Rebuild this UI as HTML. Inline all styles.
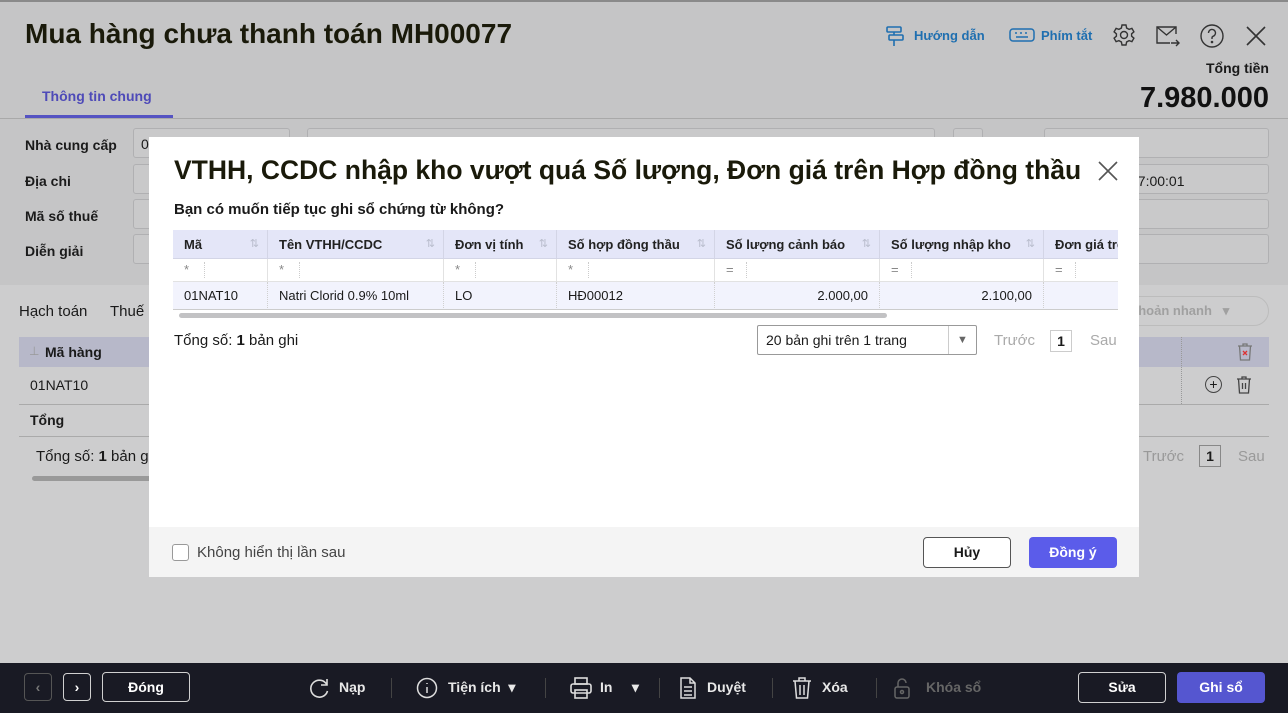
<!DOCTYPE html>
<html><head><meta charset="utf-8"><style>
*{box-sizing:border-box;margin:0;padding:0}
body{width:1288px;height:713px;overflow:hidden;font-family:"Liberation Sans",sans-serif;background:#c5c5c6;position:relative;color:#1a1a1a;font-size:14px}
.a{position:absolute}
.lbl{font-weight:bold;font-size:14px;color:#1b1b1b}
.box{position:absolute;border:1px solid #b0b0b2;border-radius:3px;background:#c9c9ca}
.th{position:absolute;top:0;height:29px;line-height:29px;font-weight:bold;font-size:13px;padding-left:11px;border-right:1px solid #d3d5e6;color:#222}
.srt{position:absolute;right:8px;top:0;color:#b8bccc;font-size:11px;font-weight:normal}
.fl{position:absolute;top:0;height:22px;line-height:22px;padding-left:11px;color:#888;font-size:13px;border-right:1px solid #e2e2e2}
.fl i{position:absolute;left:31px;top:3px;bottom:3px;border-left:1px dotted #ccc}
.td{position:absolute;top:0;height:28px;line-height:28px;font-size:13px;padding:0 11px;border-right:1px dotted #d0d0d0}
.btn{position:absolute;border:1px solid #d0d0d0;border-radius:4px;text-align:center;color:#fff;font-weight:bold;font-size:14px}
.ft{position:absolute;top:679px;color:#e8e8e8;font-size:14px;font-weight:bold}
.sep{position:absolute;top:678px;width:1px;height:20px;background:#444}
</style></head><body>
<div class="a" style="left:0;top:0;width:1288px;height:2px;background:#8a8a8a"></div>
<div class="a" style="left:25px;top:18px;font-size:28px;font-weight:bold;color:#1a1a0a">Mua hàng chưa thanh toán MH00077</div>
<svg class="a" style="left:884px;top:25px" width="22" height="22" viewBox="0 0 22 22" fill="none" stroke="#1f6fb0" stroke-width="1.6"><rect x="3" y="2" width="14" height="5" rx="1"/><rect x="5" y="10" width="14" height="5" rx="1"/><path d="M10 7v3M10 15v6"/></svg>
<div class="a" style="left:914px;top:28px;color:#1f6fb0;font-size:13px;font-weight:bold">Hướng dẫn</div>
<svg class="a" style="left:1009px;top:27px" width="26" height="16" viewBox="0 0 26 16" fill="none" stroke="#1f6fb0" stroke-width="1.5"><rect x="1" y="2" width="24" height="12" rx="3"/><path d="M6 6h2M11 6h2M16 6h2M7 10h12"/></svg>
<div class="a" style="left:1041px;top:28px;color:#1f6fb0;font-size:13px;font-weight:bold">Phím tắt</div>
<svg class="a" style="left:1112px;top:23px" width="24" height="24" viewBox="0 0 24 24" fill="none" stroke="#333" stroke-width="1.4"><circle cx="12" cy="12" r="3.5"/><path d="M10 2h4l.6 3 2.5 1.4 2.8-1 2 3.4-2.3 2v2.4l2.3 2-2 3.4-2.8-1-2.5 1.4-.6 3h-4l-.6-3-2.5-1.4-2.8 1-2-3.4 2.3-2v-2.4l-2.3-2 2-3.4 2.8 1L9.4 5z"/></svg>
<svg class="a" style="left:1155px;top:24px" width="26" height="24" viewBox="0 0 26 24" fill="none" stroke="#333" stroke-width="1.4"><path d="M21 10V3H2v16h13"/><path d="M2 3l9.5 8L21 3"/><path d="M16 19h8M21 16l3 3-3 3"/></svg>
<svg class="a" style="left:1199px;top:23px" width="26" height="26" viewBox="0 0 26 26" fill="none" stroke="#333" stroke-width="1.4"><circle cx="13" cy="13" r="11"/><path d="M9.5 10a3.5 3.5 0 1 1 4.5 3.3c-.7.3-1 .9-1 1.7v1"/><circle cx="13" cy="19" r=".6" fill="#333"/></svg>
<svg class="a" style="left:1245px;top:25px" width="22" height="22" viewBox="0 0 22 22" stroke="#333" stroke-width="1.6"><path d="M2 2l18 18M20 2L2 20"/></svg>
<div class="a" style="right:19px;top:60px;font-size:14px;font-weight:bold">Tổng tiền</div>
<div class="a" style="right:19px;top:82px;font-size:29px;font-weight:bold;color:#111">7.980.000</div>
<div class="a" style="left:42px;top:88px;font-size:14px;font-weight:bold;color:#4e4ab8">Thông tin chung</div>
<div class="a" style="left:25px;top:115px;width:148px;height:3px;background:#5553c2"></div>
<div class="a" style="left:0;top:118px;width:1288px;height:1px;background:#a9a9a9"></div>
<div class="a lbl" style="left:25px;top:137px">Nhà cung cấp</div>
<div class="a lbl" style="left:25px;top:173px">Địa chi</div>
<div class="a lbl" style="left:25px;top:208px">Mã số thuế</div>
<div class="a lbl" style="left:25px;top:243px">Diễn giải</div>
<div class="box" style="left:133px;top:128px;width:157px;height:30px"></div>
<div class="a" style="left:141px;top:136px">0</div>
<div class="box" style="left:307px;top:128px;width:628px;height:30px"></div>
<div class="box" style="left:133px;top:164px;width:40px;height:30px"></div>
<div class="box" style="left:133px;top:199px;width:40px;height:30px"></div>
<div class="box" style="left:133px;top:234px;width:40px;height:30px"></div>
<div class="box" style="left:953px;top:128px;width:30px;height:30px"></div>
<div class="box" style="left:1044px;top:128px;width:225px;height:30px"></div>
<div class="box" style="left:1044px;top:164px;width:225px;height:30px"></div>
<div class="a" style="left:1130px;top:173px;font-size:14px">07:00:01</div>
<div class="box" style="left:1044px;top:199px;width:225px;height:30px"></div>
<div class="box" style="left:1044px;top:234px;width:225px;height:30px"></div>
<div class="a" style="left:0;top:285px;width:1288px;height:378px;background:#cdcdce"></div>
<div class="a" style="left:19px;top:303px;font-size:15px">Hạch toán</div>
<div class="a" style="left:110px;top:303px;font-size:15px">Thuế</div>
<div class="a" style="left:1110px;top:296px;width:159px;height:30px;border:1px solid #bcbcbc;border-radius:15px;color:#a0a0a0;font-weight:bold;font-size:13px;line-height:28px;padding-left:20px">khoản nhanh &nbsp;&nbsp;▾</div>
<div class="a" style="left:19px;top:337px;width:1250px;height:30px;background:#b7b8c9"></div>
<div class="a" style="left:45px;top:344px;font-weight:bold;font-size:14px">Mã hàng</div>
<div class="a" style="left:29px;top:344px;color:#999;font-size:12px">⊥</div>
<div class="a" style="left:1130px;top:344px;font-weight:bold">g</div>
<div class="a" style="left:1181px;top:337px;width:1px;height:67px;border-left:1px dotted #999"></div>
<svg class="a" style="left:1237px;top:343px" width="16" height="18" fill="none" stroke="#777" stroke-width="1.3"><path d="M1 3h14M6 3V1h4v2M2.5 3l1 14h9l1-14"/><path d="M6 8l4 4M10 8l-4 4" stroke="#d33"/></svg>
<div class="a" style="left:30px;top:377px;font-size:14px">01NAT10</div>
<div class="a" style="left:1205px;top:376px;width:17px;height:17px;border:1px solid #444;border-radius:50%;text-align:center;line-height:14px;font-size:14px">+</div>
<svg class="a" style="left:1236px;top:376px" width="16" height="18" fill="none" stroke="#444" stroke-width="1.3"><path d="M1 3h14M6 3V1h4v2M2.5 3l1 14h9l1-14M6.5 7v6M9.5 7v6"/></svg>
<div class="a" style="left:19px;top:404px;width:1250px;height:1px;background:#aaa"></div>
<div class="a" style="left:30px;top:412px;font-weight:bold">Tổng</div>
<div class="a" style="left:19px;top:436px;width:1250px;height:1px;background:#aaa"></div>
<div class="a" style="left:36px;top:448px;font-size:15px">Tổng số: <b>1</b> bản g</div>
<div class="a" style="left:32px;top:476px;width:120px;height:5px;border-radius:3px;background:#999"></div>
<div class="a" style="left:1143px;top:448px;color:#999;font-size:15px">Trước</div>
<div class="a" style="left:1199px;top:445px;width:22px;height:22px;border:1px solid #888;text-align:center;line-height:20px;font-weight:bold">1</div>
<div class="a" style="left:1238px;top:448px;color:#999;font-size:15px">Sau</div>
<div class="a" style="left:149px;top:137px;width:990px;height:440px;background:#fff">
 <div class="a" style="left:25px;top:18px;font-size:26.5px;font-weight:bold;color:#1a1a0a;white-space:nowrap">VTHH, CCDC nhập kho vượt quá Số lượng, Đơn giá trên Hợp đồng thầu</div>
 <svg class="a" style="left:948px;top:23px" width="22" height="22" stroke="#555" stroke-width="1.6"><path d="M2 2l18 18M20 2L2 20"/></svg>
 <div class="a" style="left:25px;top:64px;font-size:15px;font-weight:bold">Bạn có muốn tiếp tục ghi sổ chứng từ không?</div>
 <div class="a" style="left:24px;top:93px;width:945px;height:80px;overflow:hidden;border-bottom:1px solid #ccc">
  <div class="a" style="left:0;top:0;width:960px;height:29px;background:#e4e6f8;border-bottom:1px solid #d3d5e6"></div>
  <div class="th" style="left:0;width:95px">Mã<span class="srt">⇅</span></div>
  <div class="th" style="left:95px;width:176px">Tên VTHH/CCDC<span class="srt">⇅</span></div>
  <div class="th" style="left:271px;width:113px">Đơn vị tính<span class="srt">⇅</span></div>
  <div class="th" style="left:384px;width:158px">Số hợp đồng thầu<span class="srt">⇅</span></div>
  <div class="th" style="left:542px;width:165px">Số lượng cảnh báo<span class="srt">⇅</span></div>
  <div class="th" style="left:707px;width:164px">Số lượng nhập kho<span class="srt">⇅</span></div>
  <div class="th" style="left:871px;width:100px;border:0">Đơn giá trên</div>
  <div class="a" style="left:0;top:29px;width:960px;height:22px">
   <div class="fl" style="left:0;width:95px">*<i></i></div>
   <div class="fl" style="left:95px;width:176px">*<i></i></div>
   <div class="fl" style="left:271px;width:113px">*<i></i></div>
   <div class="fl" style="left:384px;width:158px">*<i></i></div>
   <div class="fl" style="left:542px;width:165px">=<i></i></div>
   <div class="fl" style="left:707px;width:164px">=<i></i></div>
   <div class="fl" style="left:871px;width:100px;border:0">=<i></i></div>
  </div>
  <div class="a" style="left:0;top:51px;width:960px;height:28px;background:#f2f3fd;border-top:1px solid #e2e2e2">
   <div class="td" style="left:0;width:95px">01NAT10</div>
   <div class="td" style="left:95px;width:176px">Natri Clorid 0.9% 10ml</div>
   <div class="td" style="left:271px;width:113px">LO</div>
   <div class="td" style="left:384px;width:158px">HĐ00012</div>
   <div class="td" style="left:542px;width:165px;text-align:right">2.000,00</div>
   <div class="td" style="left:707px;width:164px;text-align:right">2.100,00</div>
  </div>
 </div>
 <div class="a" style="left:30px;top:176px;width:708px;height:5px;border-radius:3px;background:#c2c2c4"></div>
 <div class="a" style="left:25px;top:195px;font-size:15px">Tổng số: <b>1</b> bản ghi</div>
 <div class="a" style="left:608px;top:188px;width:220px;height:30px;border:1px solid #999;border-radius:2px;line-height:28px;padding-left:8px;font-size:14px">20 bản ghi trên 1 trang<span style="position:absolute;left:190px;top:0;height:28px;border-left:1px solid #ccc;padding-left:8px;color:#666;font-size:11px">▼</span></div>
 <div class="a" style="left:845px;top:195px;color:#aaa;font-size:15px">Trước</div>
 <div class="a" style="left:901px;top:193px;width:22px;height:22px;border:1px solid #ccc;text-align:center;line-height:20px;font-weight:bold">1</div>
 <div class="a" style="left:941px;top:195px;color:#aaa;font-size:15px">Sau</div>
 <div class="a" style="left:0;top:390px;width:990px;height:50px;background:#f4f4f4"></div>
 <div class="a" style="left:23px;top:407px;width:17px;height:17px;border:1px solid #999;border-radius:3px;background:#fff"></div>
 <div class="a" style="left:48px;top:407px;font-size:15px;color:#444">Không hiển thị lần sau</div>
 <div class="a" style="left:774px;top:400px;width:88px;height:31px;border:1px solid #555;border-radius:4px;background:#fff;text-align:center;line-height:29px;font-weight:bold">Hủy</div>
 <div class="a" style="left:880px;top:400px;width:88px;height:31px;border-radius:4px;background:#5b5cea;color:#fff;text-align:center;line-height:31px;font-weight:bold">Đồng ý</div>
</div>
<div class="a" style="left:0;top:663px;width:1288px;height:50px;background:#191a24"></div>
<div class="btn" style="left:24px;top:673px;width:28px;height:28px;border-color:#555;color:#777;line-height:26px">‹</div>
<div class="btn" style="left:63px;top:673px;width:28px;height:28px;line-height:26px">›</div>
<div class="btn" style="left:102px;top:672px;width:88px;height:30px;line-height:28px">Đóng</div>
<svg class="a" style="left:308px;top:677px" width="22" height="22" fill="none" stroke="#ddd" stroke-width="1.6"><path d="M19 8A8.5 8.5 0 1 0 19.5 14M19 2v6h-6"/></svg>
<div class="ft" style="left:339px">Nạp</div>
<div class="sep" style="left:391px"></div>
<svg class="a" style="left:416px;top:677px" width="22" height="22" fill="none" stroke="#ddd" stroke-width="1.5"><circle cx="11" cy="11" r="9.5"/><path d="M11 6v1M11 10v6"/></svg>
<div class="ft" style="left:448px">Tiện ích &nbsp;▾</div>
<div class="sep" style="left:545px"></div>
<svg class="a" style="left:569px;top:677px" width="24" height="22" fill="none" stroke="#ddd" stroke-width="1.6"><rect x="6" y="1" width="12" height="6"/><rect x="2" y="7" width="20" height="9" rx="2"/><rect x="6" y="13" width="12" height="8"/></svg>
<div class="ft" style="left:600px">In &nbsp;&nbsp;&nbsp;&nbsp;▾</div>
<div class="sep" style="left:659px"></div>
<svg class="a" style="left:679px;top:677px" width="18" height="22" fill="none" stroke="#ddd" stroke-width="1.5"><path d="M2 1h9l5 5v15H2z M11 1v5h5 M5 10h8M5 14h8M5 18h8"/></svg>
<div class="ft" style="left:707px">Duyệt</div>
<div class="sep" style="left:772px"></div>
<svg class="a" style="left:792px;top:677px" width="20" height="22" fill="none" stroke="#ddd" stroke-width="1.5"><path d="M1 4h18M7 4V1h6v3M3 4l1.5 17h11L17 4M8 8v10M12 8v10"/></svg>
<div class="ft" style="left:822px">Xóa</div>
<div class="sep" style="left:876px"></div>
<svg class="a" style="left:893px;top:677px" width="18" height="22" fill="none" stroke="#666" stroke-width="1.5"><rect x="2" y="10" width="14" height="11" rx="2"/><path d="M5 10V6a4 4 0 0 1 8 0"/><circle cx="9" cy="15" r="1.5"/></svg>
<div class="ft" style="left:926px;color:#666">Khóa sổ</div>
<div class="btn" style="left:1078px;top:672px;width:88px;height:31px;line-height:29px">Sửa</div>
<div class="btn" style="left:1177px;top:672px;width:88px;height:31px;line-height:31px;border:0;background:#5556d0">Ghi sổ</div>
</body></html>
